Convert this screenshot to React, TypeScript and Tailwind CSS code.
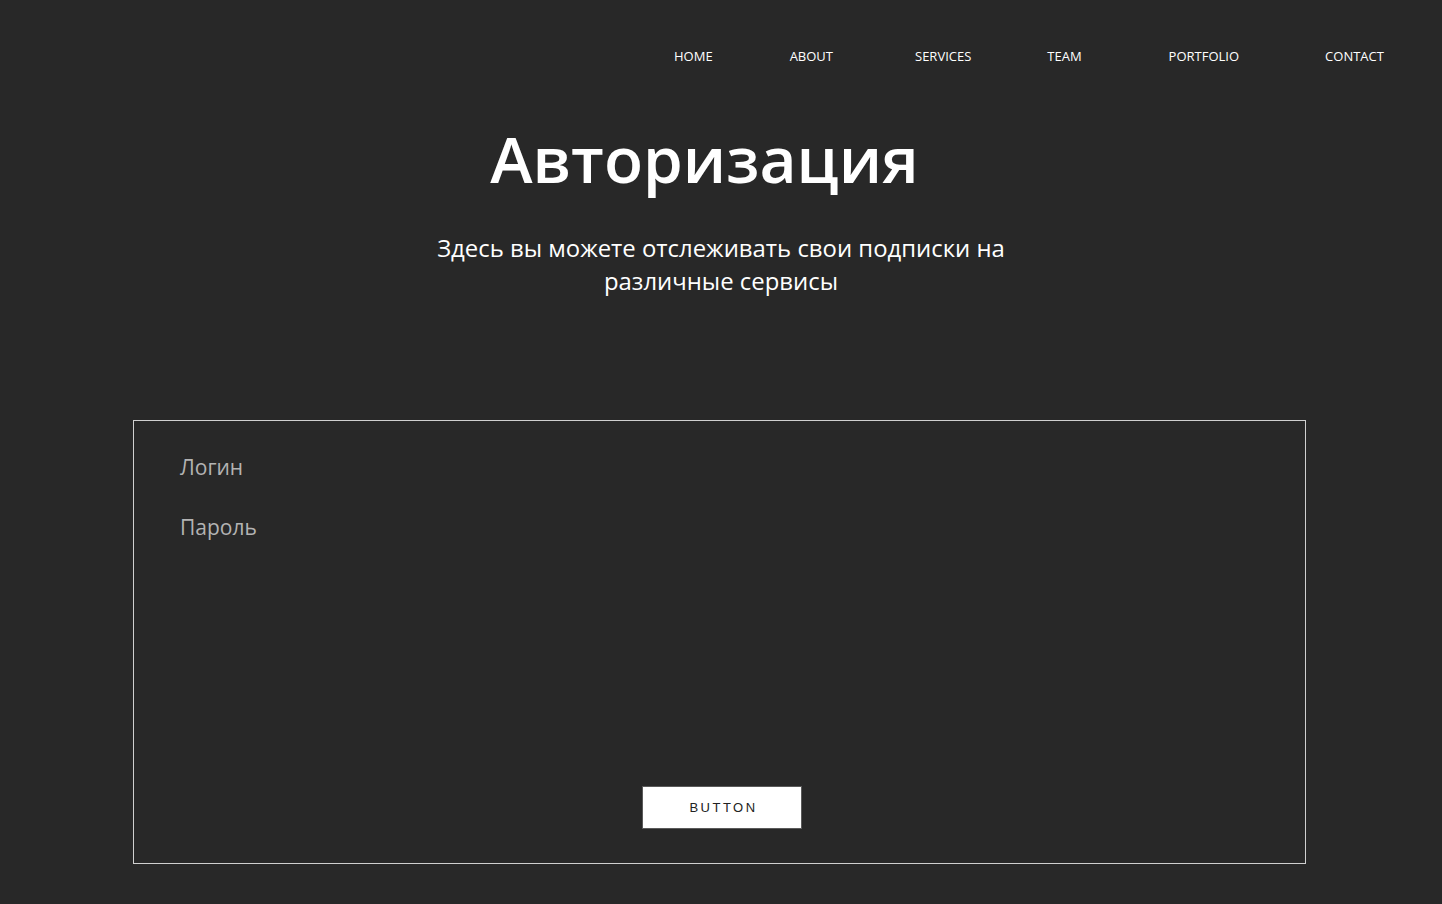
import React from "react";

const navItems: { label: string; ml: string }[] = [
  { label: "HOME", ml: "ml-[674px]" },
  { label: "ABOUT", ml: "ml-[77px]" },
  { label: "SERVICES", ml: "ml-[82px]" },
  { label: "TEAM", ml: "ml-[76px]" },
  { label: "PORTFOLIO", ml: "ml-[87px]" },
  { label: "CONTACT", ml: "ml-[86px]" },
];

export default function App() {
  return (
    <div
      className="w-[1442px] h-[904px] bg-[#282828] overflow-hidden text-white"
      style={{ fontFamily: '"Open Sans", "Noto Sans", sans-serif' }}
    >
      <nav className="flex pt-[46px] text-[13px] leading-[20px]">
        {navItems.map((n) => (
          <a key={n.label} className={`${n.ml} whitespace-nowrap`}>
            {n.label}
          </a>
        ))}
      </nav>
      <h1 className="mt-[58px] h-[67px] flex items-end justify-center text-[64px] leading-none font-semibold pr-[33px]">
        Авторизация
      </h1>
      <p className="mt-[40px] mx-auto max-w-[620px] text-center text-[23.9px] leading-[33px]">
        Здесь вы можете отслеживать свои подписки на различные сервисы
      </p>
      <div className="mt-[123px] ml-[133px] w-[1173px] h-[444px] border border-[#d0d0d0] flex flex-col">
        <div className="pl-[46px] pt-[32px] text-[21px] leading-[28px] text-[#b3b3b3] flex flex-col gap-[32px]">
          <span>Логин</span>
          <span>Пароль</span>
        </div>
        <button
          className="mt-auto mb-[34px] ml-[508px] w-[160px] h-[43px] bg-white border border-[#5a5a5a] text-[#222] text-[13px] tracking-[2.5px] pl-[3px]"
          style={{ fontFamily: '"Liberation Sans", Arial, sans-serif' }}
        >
          BUTTON
        </button>
      </div>
    </div>
  );
}
